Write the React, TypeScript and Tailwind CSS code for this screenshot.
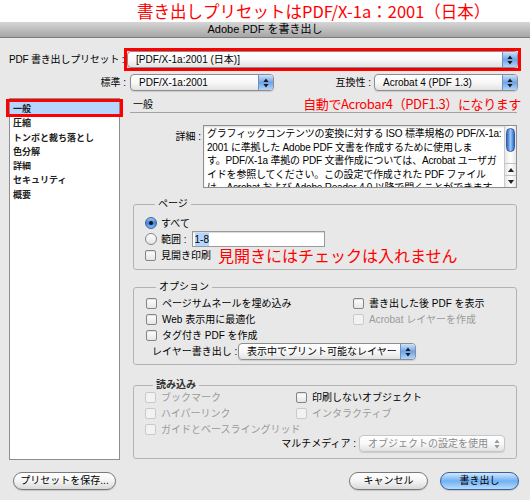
import React from "react";

const UI = "font-['Liberation_Sans','Noto_Sans_CJK_JP',sans-serif]";
const JP = "font-['Noto_Sans_CJK_JP',sans-serif]";

const Arrows = ({ color = "#1b1b1b" }: { color?: string }) => (
  <svg width="6" height="10" viewBox="0 0 6 10">
    <path d="M3 0.6 L5.6 4 H0.4Z M3 9.4 L5.6 6 H0.4Z" fill={color} />
  </svg>
);

function Select({
  value,
  className = "",
  disabled = false,
}: {
  value: string;
  className?: string;
  disabled?: boolean;
}) {
  return (
    <div
      className={`flex h-[17px] items-stretch overflow-hidden rounded-[4px] border bg-gradient-to-b from-white via-[#f8f8f8] to-[#e2e2e2] shadow-[0_1px_1px_rgba(0,0,0,0.12)] ${
        disabled ? "border-[#c6c6c6]" : "border-[#8d8d8d]"
      } ${className}`}
    >
      <span
        className={`flex-1 truncate pl-[8px] text-[10px] leading-[15px] ${
          disabled ? "text-[#8a8a8a]" : "text-black"
        }`}
      >
        {value}
      </span>
      {disabled ? (
        <span className="flex w-[15px] items-center justify-center">
          <Arrows color="#9a9a9a" />
        </span>
      ) : (
        <span className="flex w-[15px] items-center justify-center border-l border-[#6f8fc2] bg-gradient-to-b from-[#cfe2f8] via-[#6ea3e8] to-[#b2d5fa]">
          <Arrows />
        </span>
      )}
    </div>
  );
}

const Box = ({ disabled = false }: { disabled?: boolean }) => (
  <span
    className={`inline-block h-[11px] w-[11px] shrink-0 rounded-[2px] border ${
      disabled
        ? "border-[#cacaca] bg-[#f2f2f2]"
        : "border-[#858585] bg-gradient-to-b from-white to-[#e6e6e6] shadow-[inset_0_1px_1px_rgba(0,0,0,0.12)]"
    }`}
  />
);

function Check({ label, disabled = false }: { label: string; disabled?: boolean }) {
  return (
    <div className="flex h-[16px] items-center gap-[5px]">
      <Box disabled={disabled} />
      <span
        className={`whitespace-nowrap text-[10px] ${disabled ? "text-[#9b9b9b]" : "text-black"}`}
      >
        {label}
      </span>
    </div>
  );
}

const Radio = ({ on = false }: { on?: boolean }) =>
  on ? (
    <span className="flex h-[12px] w-[12px] shrink-0 items-center justify-center rounded-full border border-[#3d5f98] bg-gradient-to-b from-[#9cc6f6] via-[#3e83e0] to-[#86bdf7]">
      <span className="h-[4px] w-[4px] rounded-full bg-[#111]" />
    </span>
  ) : (
    <span className="h-[12px] w-[12px] shrink-0 rounded-full border border-[#858585] bg-gradient-to-b from-white to-[#e4e4e4]" />
  );

function Button({
  children,
  className = "",
  primary = false,
}: {
  children: React.ReactNode;
  className?: string;
  primary?: boolean;
}) {
  return (
    <button
      className={`h-[18px] rounded-full border text-[10px] leading-[16px] text-black shadow-[0_1px_1px_rgba(0,0,0,0.15)] ${
        primary
          ? "border-[#3a5f99] bg-gradient-to-b from-[#d4e8fd] via-[#6fb0f3] to-[#b9dcfd]"
          : "border-[#7a7a7a] bg-gradient-to-b from-white via-[#f4f4f4] to-[#d9d9d9]"
      } ${className}`}
    >
      {children}
    </button>
  );
}

const navItems = ["一般", "圧縮", "トンボと裁ち落とし", "色分解", "詳細", "セキュリティ", "概要"];

const detailLines = [
  "グラフィックコンテンツの変換に対する ISO 標準規格の PDF/X-1a:",
  "2001 に準拠した Adobe PDF 文書を作成するために使用しま",
  "す。PDF/X-1a 準拠の PDF 文書作成については、Acrobat ユーザガ",
  "イドを参照してください。この設定で作成された PDF ファイル",
  "は、Acrobat および Adobe Reader 4.0 以降で開くことができます。",
];

export default function App() {
  return (
    <div className={`h-[500px] w-[530px] overflow-hidden bg-[#e8e8e8] text-black ${UI}`}>
      {/* annotation banner */}
      <div className="flex h-[22px] items-center bg-white pl-[137px]">
        <span className={`whitespace-nowrap text-[16.5px] leading-[20px] text-[#ff0000] ${JP}`}>
          書き出しプリセットはPDF/X-1a：2001（日本）
        </span>
      </div>

      {/* title bar */}
      <div className="flex h-[16px] items-center justify-center border-b border-[#7c7c7c] bg-gradient-to-b from-[#d6d6d6] via-[#bdbdbd] to-[#a6a6a6] text-[11px] leading-[15px]">
        Adobe PDF を書き出し
      </div>

      <div className="pl-[9px] pr-[9px]">
        {/* preset row */}
        <div className="mt-[10px] flex items-center">
          <span className="w-[115px] shrink-0 whitespace-nowrap pr-[2px] text-right text-[10px] tracking-[-0.02em]">
            PDF 書き出しプリセット :
          </span>
          <div className="flex-1 border-[3px] border-[#ff0000]">
            <Select value="[PDF/X-1a:2001 (日本)]" />
          </div>
        </div>

        {/* standard / compatibility */}
        <div className="mt-[3px] flex items-center">
          <span className="w-[118px] pr-[1px] text-right text-[10px]">標準 :</span>
          <Select value="PDF/X-1a:2001" className="ml-[3px] w-[144px]" />
          <span className="flex-1" />
          <span className="text-[10px]">互換性 :</span>
          <Select value="Acrobat 4 (PDF 1.3)" className="mr-[3px] ml-[3px] w-[144px]" />
        </div>

        {/* main */}
        <div className="mt-[7px] flex">
          <div className="relative h-[362px] w-[111px] shrink-0 border border-[#8d8d8d] bg-white pt-[3px]">
            {navItems.map((t, i) => (
              <div
                key={t}
                className={`h-[14.3px] whitespace-nowrap pl-[3px] text-[9px] font-bold leading-[14px] text-[#222] ${JP} ${
                  i === 0 ? "bg-[#b5d5ff]" : ""
                }`}
              >
                {t}
              </div>
            ))}
            <div className="absolute left-[-4px] top-0 h-[18px] w-[117px] border-[3px] border-[#ff0000]" />
          </div>

          <div className="ml-[10px] mr-[4px] flex-1">
            {/* section header */}
            <div className="flex h-[15px] items-start justify-between border-b border-[#a3a3a3]">
              <span className="pl-[3px] text-[10px] leading-[13px]">一般</span>
              <span
                className={`-mr-[4px] -mt-[1px] whitespace-nowrap text-[13px] leading-[14px] tracking-[-0.03em] text-[#ff0000] ${JP}`}
              >
                自動でAcrobar4（PDF1.3）になります
              </span>
            </div>

            {/* details */}
            <div className="mt-[12px] flex">
              <span className="w-[73px] pr-[2px] pt-[4px] text-right text-[10px]">詳細 :</span>
              <div className="flex h-[63px] flex-1 border border-[#8f8f8f] bg-white shadow-[inset_0_1px_2px_rgba(0,0,0,0.15)]">
                <div className="h-full flex-1 overflow-hidden pl-[3px] pt-[1px]">
                  {detailLines.map((l) => (
                    <div key={l} className="whitespace-nowrap text-[10px] leading-[13.5px] tracking-[-0.02em]">
                      {l}
                    </div>
                  ))}
                </div>
                <div className="flex w-[12px] flex-col border-l border-[#c9c9c9] bg-gradient-to-r from-[#e6e6e6] via-white to-[#e6e6e6]">
                  <div className="mx-[1px] mt-[2px] h-[24px] rounded-full border border-[#36599a] bg-gradient-to-r from-[#2e69c9] via-[#9ccaf9] to-[#2e69c9]" />
                  <div className="flex-1" />
                  <div className="flex h-[12px] items-center justify-center border-t border-[#c2c2c2]">
                    <svg width="6" height="4" viewBox="0 0 6 4">
                      <path d="M3 0 L6 4 H0Z" fill="#222" />
                    </svg>
                  </div>
                  <div className="flex h-[12px] items-center justify-center border-t border-[#c2c2c2]">
                    <svg width="6" height="4" viewBox="0 0 6 4">
                      <path d="M3 4 L6 0 H0Z" fill="#222" />
                    </svg>
                  </div>
                </div>
              </div>
            </div>

            {/* pages */}
            <fieldset className="ml-[3px] mt-[9px] rounded-[3px] border border-[#b3b3b3] pb-[6px] pl-[11px]">
              <legend className="ml-[10px] px-[3px] text-[10px] leading-[14px]">ページ</legend>
              <div className="pt-[4px]">
                <div className="flex h-[16px] items-center gap-[4px]">
                  <Radio on />
                  <span className="text-[10px]">すべて</span>
                </div>
                <div className="flex h-[16px] items-center gap-[4px]">
                  <Radio />
                  <span className="text-[10px]">範囲 :</span>
                  <div className="ml-[1px] flex h-[16px] w-[133px] items-center border border-[#9a9a9a] bg-white pl-[2px] shadow-[inset_0_1px_1px_rgba(0,0,0,0.15)]">
                    <span className="bg-[#b5d5ff] text-[10px] leading-[13px]">1-8</span>
                  </div>
                </div>
                <div className="flex h-[16px] items-center">
                  <Check label="見開き印刷" />
                  <span className={`ml-[7px] whitespace-nowrap text-[16px] leading-[16px] text-[#ff0000] ${JP}`}>
                    見開きにはチェックは入れません
                  </span>
                </div>
              </div>
            </fieldset>

            {/* options */}
            <fieldset className="ml-[3px] mt-[10px] rounded-[3px] border border-[#b3b3b3] pb-[4px] pl-[12px]">
              <legend className="ml-[10px] px-[3px] text-[10px] leading-[14px]">オプション</legend>
              <div className="grid grid-cols-[207px_1fr] pt-[1px]">
                <Check label="ページサムネールを埋め込み" />
                <Check label="書き出した後 PDF を表示" />
                <Check label="Web 表示用に最適化" />
                <Check label="Acrobat レイヤーを作成" disabled />
                <Check label="タグ付き PDF を作成" />
                <div />
              </div>
              <div className="flex items-center">
                <span className="w-[92px] shrink-0 whitespace-nowrap pl-[6px] text-[10px]">レイヤー書き出し :</span>
                <Select value="表示中でプリント可能なレイヤー" className="w-[178px]" />
              </div>
            </fieldset>

            {/* include */}
            <fieldset className="ml-[3px] mt-[13px] rounded-[3px] border border-[#b3b3b3] pb-[6px] pl-[11px]">
              <legend className="ml-[8px] px-[3px] text-[10px] font-semibold leading-[14px] text-[#333]">
                読み込み
              </legend>
              <div className="-mt-[3px] grid grid-cols-[151px_1fr]">
                <Check label="ブックマーク" disabled />
                <Check label="印刷しないオブジェクト" />
                <Check label="ハイパーリンク" disabled />
                <Check label="インタラクティブ" disabled />
                <Check label="ガイドとベースライングリッド" disabled />
                <div />
              </div>
              <div className="-mt-[2px] flex items-center justify-end pr-[11px]">
                <span className="whitespace-nowrap text-[10px]">マルチメディア :</span>
                <Select value="オブジェクトの設定を使用" disabled className="ml-[3px] w-[146px]" />
              </div>
            </fieldset>
          </div>
        </div>

        {/* buttons */}
        <div className="mt-[12px] flex items-center">
          <Button className="ml-[4px] w-[103px]">プリセットを保存...</Button>
          <span className="flex-1" />
          <Button className="w-[79px]">キャンセル</Button>
          <Button primary className="ml-[12px] mr-[2px] w-[79px]">
            書き出し
          </Button>
        </div>
      </div>
    </div>
  );
}
